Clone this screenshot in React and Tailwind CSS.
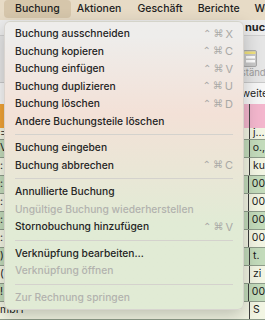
import React from "react";

const menuItems = [
  { label: "Buchung ausschneiden", key: "X" },
  { label: "Buchung kopieren", key: "C" },
  { label: "Buchung einfügen", key: "V" },
  { label: "Buchung duplizieren", key: "U" },
  { label: "Buchung löschen", key: "D" },
  { label: "Andere Buchungsteile löschen" },
  { sep: true },
  { label: "Buchung eingeben" },
  { label: "Buchung abbrechen", key: "C" },
  { sep: true },
  { label: "Annullierte Buchung" },
  { label: "Ungültige Buchung wiederherstellen", disabled: true },
  { label: "Stornobuchung hinzufügen", key: "V" },
  { sep: true },
  { label: "Verknüpfung bearbeiten…" },
  { label: "Verknüpfung öffnen", disabled: true },
  { sep: true },
  { label: "Zur Rechnung springen", disabled: true },
];

const rows = [
  { right: "j…", green: false, left: "=", h: "h-[12px]" },
  { right: "o.,", green: true, left: "V" },
  { right: "ku", green: false, left: ":" },
  { right: "00", green: true, left: ":" },
  { right: "00", green: false, left: ":" },
  { right: "00", green: true, left: ":" },
  { right: "00", green: false, left: ":" },
  { right: "t.", green: true, left: ")" },
  { right: "zi", green: false, left: "(" },
  { right: "00", green: true, left: "!" },
  { right: "S", green: false, left: "mbH" },
];

function MenuBar() {
  return (
    <div className="flex h-[20px] items-start bg-[#e7dbc6] pl-[4px] text-[10.5px] font-medium text-[#1e1e1e]">
      <span className="flex h-[18px] items-center rounded-[4px] bg-[#d6c6ab] px-[11px]">Buchung</span>
      <span className="ml-[6px] flex h-[18px] items-center">Aktionen</span>
      <span className="ml-[16px] flex h-[18px] items-center">Geschäft</span>
      <span className="ml-[15px] flex h-[18px] items-center">Berichte</span>
      <span className="ml-[15px] flex h-[18px] items-center">Weitere</span>
    </div>
  );
}

function ListIcon() {
  return (
    <svg width="14" height="17" viewBox="0 0 14 17">
      <rect x="0.5" y="0.5" width="13" height="16" rx="1.5" fill="#c9c9c9" stroke="#a8a8a8" />
      <rect x="1.5" y="1.5" width="11" height="2.5" fill="#f1e27c" />
      <rect x="3" y="6" width="9" height="2.5" fill="#ffffff" />
      <rect x="3" y="10" width="9" height="2.5" fill="#ffffff" />
    </svg>
  );
}

function Background() {
  return (
    <div className="flex flex-col">
      <div className="flex h-[15px] items-center bg-[#ececec] pl-[245px] text-[11px] font-bold text-[#222]">
        nuc
      </div>
      <div className="flex h-[47px] border-t border-[#cfcfcf] bg-[#e5e5e5]">
        <div className="w-[4px] bg-[#b2b2b2]" />
        <div className="pl-[243px] pt-[14px]">
          <ListIcon />
          <div className="-ml-[14px] mt-[1px] text-[9.5px] leading-[10px] text-[#9b9b9b]">Bestände</div>
        </div>
      </div>
      <div className="flex h-[22px] border-t border-[#c9c9c9] bg-[#f6f6f6]">
        <div className="w-[4px] bg-[#b2b2b2]" />
        <div className="flex items-center pl-[235px] text-[10.5px] text-[#1c1c1c]">Zweiter</div>
      </div>
      <div className="flex h-[24px]">
        <div className="w-[4px] bg-[#f1a437]" />
        <div className="flex w-[246px] items-end border-r border-[#444] bg-[#f3b6cd] pb-[3px] text-[10px] font-bold text-[#2233dd]">
          L
        </div>
        <div className="flex-1 bg-[#f3b6cd]" />
      </div>
      {rows.map((r, i) => (
        <div
          key={i}
          className={`flex ${r.h ? r.h : "h-[18px]"} border-b border-[#8e9c8a] text-[10.5px] text-[#1c1c1c] ${
            r.green ? "bg-[#c3dbbb]" : "bg-[#f2f5e3]"
          }`}
        >
          <div className="flex w-[250px] items-center overflow-hidden border-r border-[#3d3d3d] leading-none">
            {r.left}
          </div>
          <div className="flex items-center overflow-hidden pl-[3px] leading-none">{r.right}</div>
        </div>
      ))}
    </div>
  );
}

function Menu() {
  return (
    <div className="absolute left-[4px] top-[21px] w-[240px] rounded-[6px] border border-[#cfcac4]/70 bg-linear-to-b from-[#eeedeb] from-5% via-[#f3e1d7] via-32% to-[#e1ebd5] to-70% px-[10px] pb-[3px] pt-[3px] text-[10.25px] font-medium shadow-[0_6px_18px_rgba(0,0,0,0.22)]">
      {menuItems.map((it, i) =>
        it.sep ? (
          <div key={i} className="flex h-[9px] items-center">
            <div className="h-px w-full bg-[#d4d2cd]" />
          </div>
        ) : (
          <div key={i} className="flex h-[17.5px] items-center justify-between">
            <span className={it.disabled ? "text-[#b2b2ae]" : "text-[#242424]"}>{it.label}</span>
            {it.key && (
              <span className="flex gap-[2px] font-['DejaVu_Sans',sans-serif] text-[10px] font-normal text-[#a9a9a6]">
                <span>⌃</span>
                <span>⌘</span>
                <span className="font-['Inter',sans-serif] text-[11px]">{it.key}</span>
              </span>
            )}
          </div>
        )
      )}
    </div>
  );
}

export default function App() {
  return (
    <div className="relative h-[320px] w-[265px] overflow-hidden bg-[#ececec] font-['Inter',sans-serif]">
      <MenuBar />
      <Background />
      <Menu />
    </div>
  );
}
